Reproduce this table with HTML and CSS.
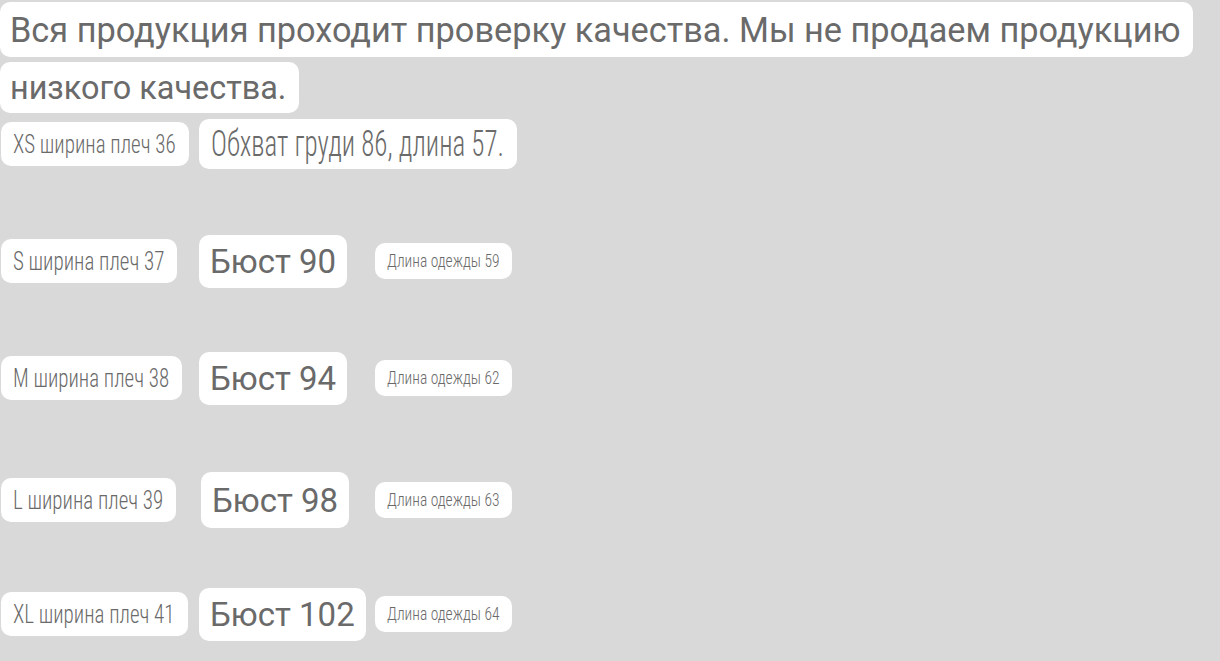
FILE: index.html
```html
<!DOCTYPE html>
<html lang="ru">
<head>
  <meta charset="UTF-8" />
  <meta name="viewport" content="width=device-width, initial-scale=1.0"/>
  <title>Размерная сетка</title>
  <link rel="stylesheet" href="styles.css">
</head>
<body>

<!-- Примечание о качестве -->
<div class="notes">
  <p class="note note-first">Вся продукция проходит проверку качества. Мы не продаем продукцию</p>
  <p class="note note-second">низкого качества.</p>
</div>

<!-- Таблица размеров -->
<div class="sizes">
  <div class="size-row">
    <span class="pill size"><span class="tall">XS ширина плеч 36</span></span>
    <span class="pill chest"><span class="tall">Обхват груди 86, длина 57.</span></span>
  </div>
  <div class="size-row">
    <span class="pill size"><span class="tall">S ширина плеч 37</span></span>
    <span class="pill bust">Бюст 90</span>
    <span class="pill length"><span class="tall">Длина одежды 59</span></span>
  </div>
  <div class="size-row">
    <span class="pill size"><span class="tall">M ширина плеч 38</span></span>
    <span class="pill bust">Бюст 94</span>
    <span class="pill length"><span class="tall">Длина одежды 62</span></span>
  </div>
  <div class="size-row row-l">
    <span class="pill size"><span class="tall">L ширина плеч 39</span></span>
    <span class="pill bust bust-big">Бюст 98</span>
    <span class="pill length"><span class="tall">Длина одежды 63</span></span>
  </div>
  <div class="size-row row-xl">
    <span class="pill size"><span class="tall">XL ширина плеч 41</span></span>
    <span class="pill bust">Бюст 102</span>
    <span class="pill length"><span class="tall">Длина одежды 64</span></span>
  </div>
</div>

</body>
</html>
```

FILE: styles.css
```css
/* Базовые стили */
body {
  margin: 0;
  background: #d9d9d9;
  color: #6a6a6a;
  font-family: 'Roboto', 'Liberation Sans', sans-serif;
  height: 100vh;
  overflow: hidden;
}
.notes {
  display: flex;
  flex-direction: column;
  align-items: flex-start;
  padding-top: 2px;
}
.note {
  margin: 0;
  background: #fff;
  font-size: 34.3px;
  padding: 0 13px 0 10px;
  border-radius: 10px;
  display: flex;
  align-items: center;
}
.note-first {
  height: 55px;
}
.note-second {
  font-size: 32.4px;
  height: 51px;
  margin-top: 5px;
}
.sizes {
  display: flex;
  flex-direction: column;
  padding-left: 1px;
}
.size-row {
  display: grid;
  grid-template-columns: 198px 176px auto;
  align-items: center;
  justify-items: start;
  height: 54px;
  margin-top: 63px;
}
.size-row:first-child {
  margin-top: 4px;
}
.row-l {
  margin-top: 67px;
}
.row-xl {
  margin-top: 61px;
}
.pill {
  background: #fff;
  border-radius: 10px;
  display: flex;
  align-items: center;
  white-space: nowrap;
}
.tall {
  display: inline-block;
}
.size, .chest, .length {
  font-family: 'Roboto Condensed', 'Liberation Sans Narrow', sans-serif;
  font-weight: 300;
}
.size {
  font-size: 21px;
  height: 44px;
  padding: 0 13px 0 12px;
}
.size .tall {
  transform: scaleY(1.24);
}
.chest {
  font-size: 27px;
  height: 50px;
  padding: 0 13px 0 12px;
  grid-column: 2 / 4;
}
.chest .tall {
  transform: scaleY(1.38);
}
.bust {
  font-size: 33px;
  height: 53px;
  padding: 0 11px;
}
.bust-big {
  height: 56px;
  margin-left: 2px;
}
.length {
  font-size: 15.5px;
  height: 36px;
  padding: 0 12px;
}
.length .tall {
  transform: scaleY(1.18);
}
```
